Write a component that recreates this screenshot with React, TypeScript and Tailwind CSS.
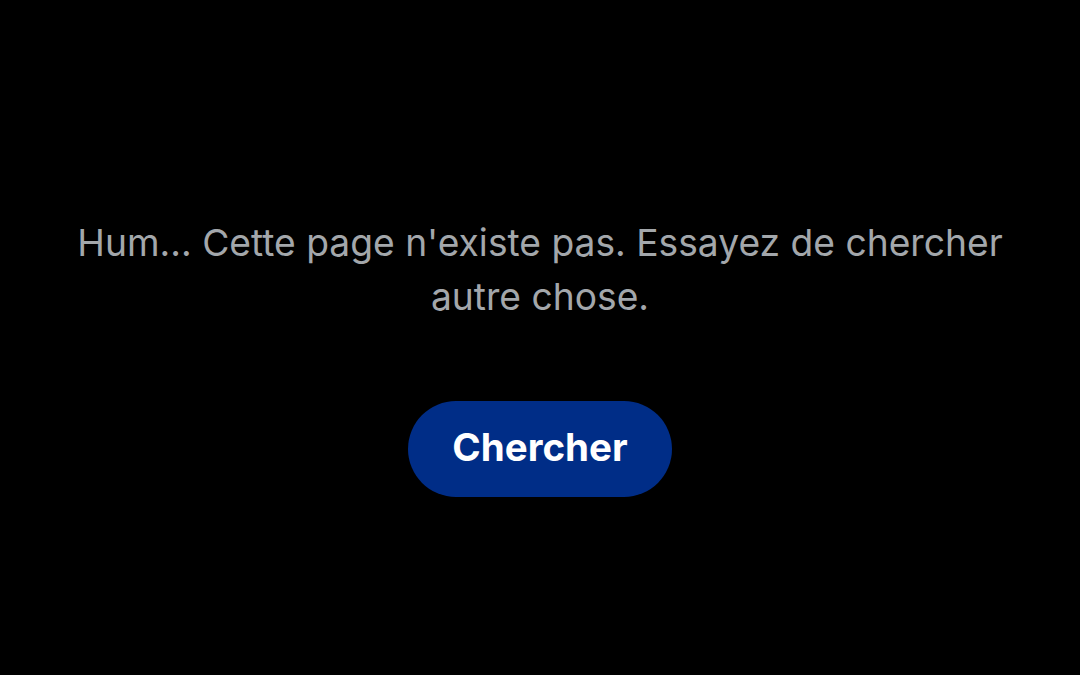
export default function App() {
  return (
    <div className="min-h-[675px] w-full bg-black flex flex-col items-center pt-[216px] font-['Inter',sans-serif]">
      <p className="max-w-[980px] px-4 text-center text-[37.2px] leading-[54px] text-[#a3a7ab]">
        Hum... Cette page n'existe pas. Essayez de chercher autre chose.
      </p>
      <button className="mt-[77px] h-[96px] w-[264px] rounded-full bg-[#002d87] pb-[3px] text-[38.5px] font-bold text-white">
        Chercher
      </button>
    </div>
  );
}
